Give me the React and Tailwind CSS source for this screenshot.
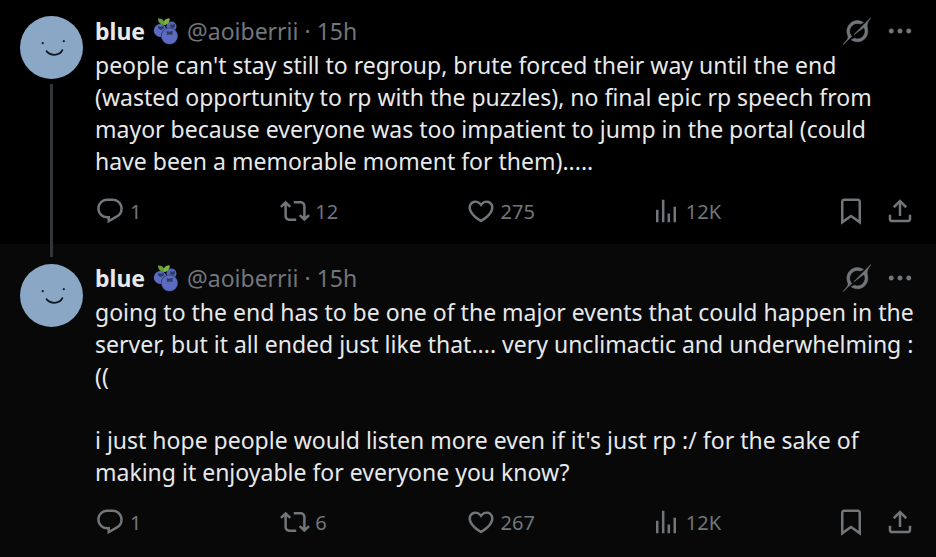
const icons = {
  reply:
    "M1.751 10c0-4.42 3.584-8 8.005-8h4.366c4.49 0 8.129 3.64 8.129 8.13 0 2.96-1.607 5.68-4.196 7.11l-8.054 4.46v-3.69h-.067c-4.49.1-8.183-3.51-8.183-8.01zm8.005-6c-3.317 0-6.005 2.69-6.005 6 0 3.37 2.77 6.08 6.138 6.01l.351-.01h1.761v2.3l5.087-2.81c1.951-1.08 3.163-3.13 3.163-5.36 0-3.39-2.744-6.13-6.129-6.13H9.756z",
  repost:
    "M4.5 3.88l4.432 4.14-1.364 1.46L5.5 7.55V16c0 1.1.896 2 2 2H13v2H7.5c-2.209 0-4-1.79-4-4V7.55L1.432 9.48.068 8.02 4.5 3.88zM16.5 6H11V4h5.5c2.209 0 4 1.79 4 4v8.45l2.068-1.93 1.364 1.46-4.432 4.14-4.432-4.14 1.364-1.46 2.068 1.93V8c0-1.1-.896-2-2-2z",
  like:
    "M16.697 5.5c-1.222-.06-2.679.51-3.89 2.16l-.805 1.09-.806-1.09C9.984 6.01 8.526 5.44 7.304 5.5c-1.243.07-2.349.78-2.91 1.91-.552 1.12-.633 2.78.479 4.82 1.074 1.97 3.257 4.27 7.129 6.61 3.87-2.34 6.052-4.64 7.126-6.61 1.111-2.04 1.03-3.7.477-4.82-.561-1.13-1.666-1.84-2.908-1.91zm4.187 7.69c-1.351 2.48-4.001 5.12-8.379 7.67l-.503.3-.504-.3c-4.379-2.55-7.029-5.19-8.382-7.67-1.36-2.5-1.41-4.86-.514-6.67.887-1.79 2.647-2.91 4.601-3.01 1.651-.09 3.368.56 4.798 2.01 1.429-1.45 3.146-2.1 4.796-2.01 1.954.1 3.714 1.22 4.601 3.01.896 1.81.846 4.17-.514 6.67z",
  views: "M8.75 21V3h2v18h-2zM18 21V8.5h2V21h-2zM4 21l.004-10h2L6 21H4zm9.248 0v-7h2v7h-2z",
  bookmark:
    "M4 4.5C4 3.12 5.119 2 6.5 2h11C18.881 2 20 3.12 20 4.5v18.44l-8-5.71-8 5.71V4.5zM6.5 4c-.276 0-.5.22-.5.5v14.56l6-4.29 6 4.29V4.5c0-.28-.224-.5-.5-.5h-11z",
  share:
    "M12 2.59l5.7 5.7-1.41 1.42L13 6.41V16h-2V6.41l-3.3 3.3-1.41-1.42L12 2.59zM21 15l-.02 3.51c0 1.38-1.12 2.49-2.5 2.49H5.5C4.11 21 3 19.88 3 18.5V15h2v3.5c0 .28.22.5.5.5h12.98c.28 0 .5-.22.5-.5L19 15h2z",
  more: "M3 12c0-1.1.9-2 2-2s2 .9 2 2-.9 2-2 2-2-.9-2-2zm9 2c1.1 0 2-.9 2-2s-.9-2-2-2-2 .9-2 2 .9 2 2 2zm7 0c1.1 0 2-.9 2-2s-.9-2-2-2-2 .9-2 2 .9 2 2 2z",
};

const grokPath =
  "M12.745 20.54l10.97-8.19c.539-.4 1.307-.244 1.564.38 1.349 3.288.746 7.241-1.938 9.955-2.683 2.714-6.417 3.31-9.83 1.954l-3.728 1.745c5.347 3.697 11.84 2.782 15.898-1.324 3.219-3.255 4.216-7.692 3.284-11.693l.008.009c-1.351-5.878.332-8.227 3.782-13.031L33 0l-4.54 4.59v-.014L12.743 20.544m-2.263 1.987c-3.837-3.707-3.175-9.446.1-12.755 2.42-2.449 6.388-3.448 9.852-1.979l3.72-1.737c-.67-.49-1.53-1.017-2.515-1.387-4.455-1.854-9.789-.931-13.41 2.728-3.483 3.523-4.579 8.94-2.697 13.561 1.405 3.454-.899 5.898-3.22 8.364C1.49 30.2.666 31.074 0 32l10.478-9.466";

function Icon({ name }) {
  return (
    <svg viewBox="0 0 24 24" className="size-[30px] shrink-0 fill-current" aria-hidden="true">
      <path d={icons[name]} />
    </svg>
  );
}

function Avatar() {
  return (
    <svg viewBox="0 0 63 63" className="size-[63px] shrink-0" role="img" aria-label="blue">
      <circle cx="31.5" cy="31.5" r="31.5" fill="#8aa8c6" />
      <circle cx="22.7" cy="27.2" r="1.1" fill="#16202b" />
      <circle cx="43.8" cy="25.2" r="1.1" fill="#16202b" />
      <path d="M26.500 35.200C28.500 37.600 31 38.800 34.200 38.800C37.800 38.800 41 37.200 42.300 34.200" fill="none" stroke="#11181f" strokeWidth="1.8" strokeLinecap="round" />
    </svg>
  );
}

function Blueberries() {
  return (
    <svg viewBox="0 0 26 28" className="h-7 w-[26px] shrink-0" role="img" aria-label="blueberries">
      <circle cx="18.5" cy="9.5" r="5" fill="#5664b8" />
      <path d="M17 7.500l2.500.2 2.500-.7-.3 3-2 1.100-2.400-1z" fill="#2b3b63" />
      <circle cx="7.2" cy="13.5" r="6.400" fill="#5c6bc0" />
      <path d="M5 9l3 .7 2.600-1 .2 2.800-2.800 1.500-2.700-1.300z" fill="#2b3b63" />
      <circle cx="16.500" cy="19" r="8.600" fill="#283766" />
      <circle cx="16.500" cy="19.200" r="7.900" fill="#5c6bc0" />
      <path d="M13.600 14l3 .7 3.200-.9-.4 3 .1 1.200-2.800-.5-3 .5.300-1.600z" fill="#2b3b63" />
      <path d="M5 1.500c3-.2 5.200.8 6 3C12 2.300 14 1.200 16.500 1.400c.3 3.400-1.800 6-5.500 6.600C7.300 7.800 5 5.200 5 1.500z" fill="#689f38" />
      <path d="M11 4.500C12 2.300 14 1.200 16.500 1.400c.3 3.400-1.800 6-5.500 6.600z" fill="#7cb342" />
    </svg>
  );
}

function Action({ name, label, count }) {
  return (
    <button type="button" aria-label={label} className="flex items-center gap-[5px]">
      <Icon name={name} />
      {count && <span className="pt-[2px] text-[20px] leading-6">{count}</span>}
    </button>
  );
}

function PostBody({ text, reposts, likes }) {
  return (
    <div className="min-w-0 flex-1">
      <header className="flex h-8 items-center text-[23px] leading-8 text-[#71767b]">
        <a href="#blue" className="font-bold text-[#e7e9ea]">blue</a>
        <span className="ml-2"><Blueberries /></span>
        <a href="#blue" className="ml-2">@aoiberrii</a>
        <span className="mx-[6px]">·</span>
        <time>15h</time>
        <div className="ml-auto flex items-center gap-[14px]">
          <button type="button" aria-label="Explain this post">
            <svg
              viewBox="0 0 33 32"
              className="size-7 fill-current stroke-current"
              strokeWidth="0.7"
              strokeLinejoin="round"
              aria-hidden="true"
            >
              <path d={grokPath} />
            </svg>
          </button>
          <button type="button" aria-label="More">
            <Icon name="more" />
          </button>
        </div>
      </header>
      <p className="mt-[2px] whitespace-pre text-[23px] leading-8 text-[#e7e9ea]">{text}</p>
      <div className="mt-[19px] flex items-center text-[#71767b]">
        <div className="grid flex-1 grid-cols-4">
          <Action name="reply" label="Reply" count="1" />
          <Action name="repost" label="Repost" count={reposts} />
          <Action name="like" label="Like" count={likes} />
          <Action name="views" label="Views" count="12K" />
        </div>
        <div className="flex gap-[19px]">
          <Action name="bookmark" label="Bookmark" />
          <Action name="share" label="Share" />
        </div>
      </div>
    </div>
  );
}

const first = `people can't stay still to regroup, brute forced their way until the end
(wasted opportunity to rp with the puzzles), no final epic rp speech from
mayor because everyone was too impatient to jump in the portal (could
have been a memorable moment for them).....`;

const second = `going to the end has to be one of the major events that could happen in the
server, but it all ended just like that.... very unclimactic and underwhelming :
((

i just hope people would listen more even if it's just rp :/ for the sake of
making it enjoyable for everyone you know?`;

export default function App() {
  return (
    <main className="min-h-screen bg-[#080808] font-['Noto_Sans',sans-serif]">
      <article className="flex gap-3 bg-black pr-[21px] pl-5">
        <div className="flex flex-col items-center gap-[5px] pt-4">
          <Avatar />
          <div className="w-[3px] flex-1 bg-[#333639]" />
        </div>
        <div className="flex flex-1 pt-[15px] pb-[18px]">
          <PostBody text={first} reposts="12" likes="275" />
        </div>
      </article>
      <article className="flex gap-3 pr-[21px] pl-5">
        <div className="flex flex-col items-center gap-[7px]">
          <div className="h-[13px] w-[3px] bg-[#333639]" />
          <Avatar />
        </div>
        <div className="flex flex-1 pt-[18px]">
          <PostBody text={second} reposts="6" likes="267" />
        </div>
      </article>
    </main>
  );
}
